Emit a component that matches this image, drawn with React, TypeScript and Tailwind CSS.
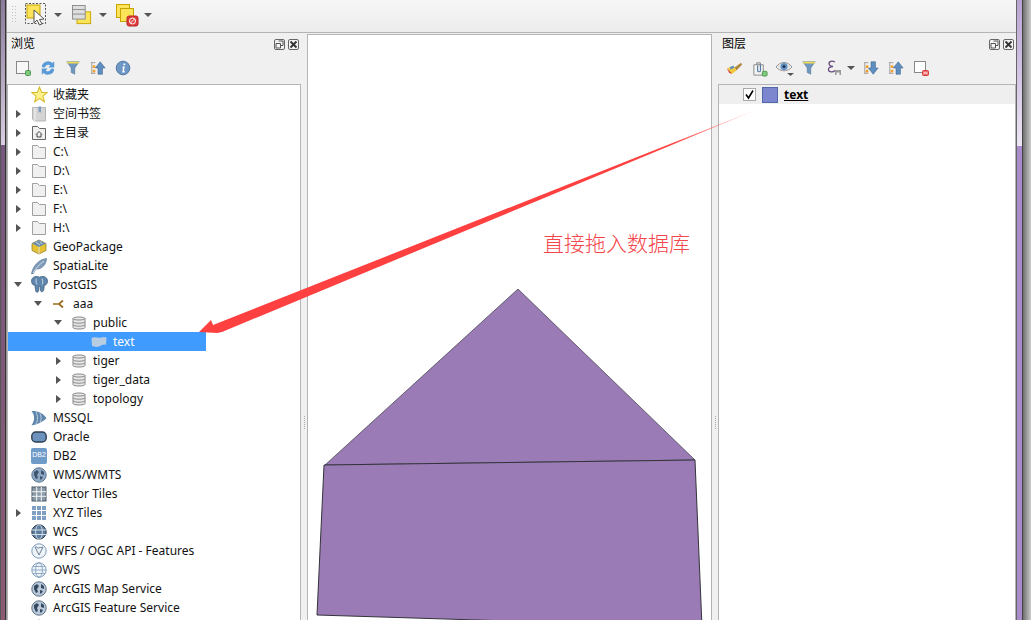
const UI_FONT = 'font-["Noto_Sans","Noto_Sans_CJK_SC",sans-serif]'

type Arrow = 'right' | 'down' | null

interface TreeRow {
  label: string
  depth: number
  arrow: Arrow
  icon: keyof typeof ICONS
  cjk?: boolean
  selected?: boolean
}

function Svg({ children, size = 16 }: { children: React.ReactNode; size?: number }) {
  return (
    <svg width={size} height={size} viewBox="0 0 16 16" className="shrink-0">
      {children}
    </svg>
  )
}

function Globe({ fill = '#8fa9c4', land = '#3f556e', rim = '#5a7694' }: { fill?: string; land?: string; rim?: string }) {
  return (
    <Svg>
      <circle cx="8" cy="8" r="7.2" fill={fill} stroke={rim} />
      <path d="M3 5 L6 3 L8 5 L6 8 L7 11 L5 12 L3 8 Z M10 3 L13 5 L13 8 L10 7 Z M9 9 L12 10 L10 13 L9 12 Z" fill={land} />
    </Svg>
  )
}

function LineGlobe({ stroke = '#7f9cbc' }: { stroke?: string }) {
  return (
    <Svg>
      <circle cx="8" cy="8" r="7.2" fill="#eef3f8" stroke={stroke} />
      <ellipse cx="8" cy="8" rx="3.4" ry="7.2" fill="none" stroke={stroke} strokeWidth="0.8" />
      <path d="M1 8 H15 M2 4.5 H14 M2 11.5 H14" stroke={stroke} strokeWidth="0.8" />
    </Svg>
  )
}

function DbIcon() {
  return (
    <Svg>
      <path d="M2 3.5 C2 1.5 14 1.5 14 3.5 V12.5 C14 14.5 2 14.5 2 12.5 Z" fill="#e8e8e8" stroke="#8a8a8a" />
      <path d="M2 3.5 C2 5.5 14 5.5 14 3.5 M2 6.7 C2 8.7 14 8.7 14 6.7 M2 9.7 C2 11.7 14 11.7 14 9.7" fill="none" stroke="#8a8a8a" />
    </Svg>
  )
}

function FolderIcon({ home }: { home?: boolean }) {
  return (
    <Svg>
      <path d="M1.5 1.5 H6.5 L8.5 3.5 H14.5 V14.5 H1.5 Z" fill="#f0f0f0" stroke={home ? '#666' : '#a0a0a0'} />
      {home && <path d="M5 9.5 L8 6.5 L11 9.5 M6 9 V12 H10 V9" fill="none" stroke="#444" />}
    </Svg>
  )
}

const ICONS = {
  star: (
    <Svg size={17}>
      <path d="M8 1 L10 6 L15.2 6.2 L11.2 9.5 L12.6 14.8 L8 11.8 L3.4 14.8 L4.8 9.5 L0.8 6.2 L6 6 Z" fill="#fdf38a" stroke="#d9b928" />
    </Svg>
  ),
  bookmark: (
    <Svg>
      <path d="M1.5 1.5 H14.5 V15 H3.5 L1.5 13 Z" fill="#d4d4d4" stroke="#b5b5b5" />
      <path d="M4 2 V15" stroke="#f2f2f2" />
      <path d="M7.5 0.5 H10 V7 L8.8 5.6 L7.5 7 Z" fill="#7e9cbd" />
    </Svg>
  ),
  home: <FolderIcon home />,
  folder: <FolderIcon />,
  geopackage: (
    <Svg>
      <path d="M8 1 L15 4.5 V11.5 L8 15 L1 11.5 V4.5 Z" fill="#e6c233" stroke="#8a7420" strokeWidth="0.7" />
      <path d="M8 1 L15 4.5 L8 8 L1 4.5 Z" fill="#6f8fb0" />
      <path d="M8 8 V15 M5 3 L9 6 M9 2.5 L11 5" stroke="#dfe8f0" strokeWidth="0.8" />
    </Svg>
  ),
  spatialite: (
    <Svg>
      <path d="M0.5 16 C1.5 9 7 1.5 15.5 0.5 C15.5 6 11 11.5 5 11 L2 16 Z" fill="#7f9cba" stroke="#4f6c8c" strokeWidth="0.6" />
      <path d="M2 15 C5 10 9 6 13 3" stroke="#e3ebf3" strokeWidth="0.8" fill="none" />
    </Svg>
  ),
  postgis: (
    <svg width="17" height="17" viewBox="0 0 16 16" className="shrink-0">
      <path d="M0.5 4.5 C0.5 0.5 6 -0.5 8 1.2 C10 -0.5 15.5 0.5 15.5 4.5 C15.5 8 13.5 9 12.5 8.5 L12 13 C11.5 15.5 9 15.5 8.8 13 L8.5 9.5 L7.2 10 L7.2 14 C6.5 16 4.2 15.5 4.2 13 L3.8 8.5 C2 9 0.5 7.5 0.5 4.5 Z" fill="#5f86ac" stroke="#38587a" strokeWidth="0.7" />
      <path d="M10.5 2.5 C11.5 5 11 7 10.5 8 M5 2.5 C4.5 5 5 7 5.5 8" stroke="#dce6ef" strokeWidth="0.8" fill="none" />
    </svg>
  ),
  connection: (
    <Svg>
      <path d="M2 8 H8 L12 4.5 M8 8 L12 11.5" fill="none" stroke="#9a6a1e" strokeWidth="1.7" />
    </Svg>
  ),
  db: <DbIcon />,
  layer: (
    <Svg>
      <path d="M0.5 4 C4 2 7 4.5 10 3.5 C12 3 14 3 15.5 3.5 L15 11 C12.5 10 11 11 8 12.5 C5 13.5 3 12.5 1 12 Z" fill="#b9cde2" />
    </Svg>
  ),
  mssql: (
    <Svg>
      <path d="M0.5 1 C6 0.5 12 3 15.5 8 C12 12 6 14.5 0.5 15.5 C4 10 4 6 0.5 1 Z" fill="#5f86ac" />
      <path d="M5 2 C7 6 7 10 5 14 M9 3.5 C10.5 7 10.5 10 9 12.5" stroke="#d3e0ec" strokeWidth="0.8" fill="none" />
    </Svg>
  ),
  oracle: (
    <Svg>
      <rect x="0.8" y="3" width="14.4" height="10" rx="4" fill="#6b93bd" stroke="#2f3f52" strokeWidth="1.4" />
    </Svg>
  ),
  db2: (
    <div className="flex h-4 w-4 items-center justify-center rounded-[2px] bg-[#6f9bc9] font-['Liberation_Sans',sans-serif] text-[7px] text-white">
      DB2
    </div>
  ),
  wms: <Globe />,
  vectorTiles: (
    <Svg>
      <rect x="1" y="1" width="14" height="14" fill="#8b9aa9" stroke="#4d5a68" />
      <path d="M5.7 1 V15 M10.3 1 V15 M1 5.7 H15 M1 10.3 H15" stroke="#f6f6f6" />
    </Svg>
  ),
  xyz: (
    <Svg>
      <path d="M1 1 h4 v4 h-4 Z M6 1 h4 v4 h-4 Z M11 1 h4 v4 h-4 Z M1 6 h4 v4 h-4 Z M6 6 h4 v4 h-4 Z M11 6 h4 v4 h-4 Z M1 11 h4 v4 h-4 Z M6 11 h4 v4 h-4 Z M11 11 h4 v4 h-4 Z" fill="#7f9fc4" />
    </Svg>
  ),
  wcs: (
    <Svg>
      <circle cx="8" cy="8" r="7.2" fill="#5d7d9e" stroke="#2d3f52" />
      <ellipse cx="8" cy="8" rx="3.4" ry="7.2" fill="none" stroke="#e3ebf3" strokeWidth="0.8" />
      <path d="M1 6 H15 M1 10.5 H15" stroke="#e3ebf3" strokeWidth="0.9" />
    </Svg>
  ),
  wfs: (
    <Svg>
      <circle cx="8" cy="8" r="7.2" fill="#eef3f8" stroke="#7f9cbc" />
      <path d="M4 4 L8 12 L12 4 M4 4 C6 3 6.5 6 8 5 C9.5 4 10 5 12 4" fill="none" stroke="#6a7f96" />
    </Svg>
  ),
  ows: <LineGlobe />,
  arcgis: <Globe fill="#b9c9da" land="#36495f" rim="#5b6f85" />,
  peek: (
    <Svg>
      <path d="M8 0 L11 5 H5 Z" fill="#7f9cbc" />
    </Svg>
  ),
}

const TREE_ROWS: TreeRow[] = [
  { label: '收藏夹', depth: 0, arrow: null, icon: 'star', cjk: true },
  { label: '空间书签', depth: 0, arrow: 'right', icon: 'bookmark', cjk: true },
  { label: '主目录', depth: 0, arrow: 'right', icon: 'home', cjk: true },
  { label: 'C:\\', depth: 0, arrow: 'right', icon: 'folder' },
  { label: 'D:\\', depth: 0, arrow: 'right', icon: 'folder' },
  { label: 'E:\\', depth: 0, arrow: 'right', icon: 'folder' },
  { label: 'F:\\', depth: 0, arrow: 'right', icon: 'folder' },
  { label: 'H:\\', depth: 0, arrow: 'right', icon: 'folder' },
  { label: 'GeoPackage', depth: 0, arrow: null, icon: 'geopackage' },
  { label: 'SpatiaLite', depth: 0, arrow: null, icon: 'spatialite' },
  { label: 'PostGIS', depth: 0, arrow: 'down', icon: 'postgis' },
  { label: 'aaa', depth: 1, arrow: 'down', icon: 'connection' },
  { label: 'public', depth: 2, arrow: 'down', icon: 'db' },
  { label: 'text', depth: 3, arrow: null, icon: 'layer', selected: true },
  { label: 'tiger', depth: 2, arrow: 'right', icon: 'db' },
  { label: 'tiger_data', depth: 2, arrow: 'right', icon: 'db' },
  { label: 'topology', depth: 2, arrow: 'right', icon: 'db' },
  { label: 'MSSQL', depth: 0, arrow: null, icon: 'mssql' },
  { label: 'Oracle', depth: 0, arrow: null, icon: 'oracle' },
  { label: 'DB2', depth: 0, arrow: null, icon: 'db2' },
  { label: 'WMS/WMTS', depth: 0, arrow: null, icon: 'wms' },
  { label: 'Vector Tiles', depth: 0, arrow: null, icon: 'vectorTiles' },
  { label: 'XYZ Tiles', depth: 0, arrow: 'right', icon: 'xyz' },
  { label: 'WCS', depth: 0, arrow: null, icon: 'wcs' },
  { label: 'WFS / OGC API - Features', depth: 0, arrow: null, icon: 'wfs' },
  { label: 'OWS', depth: 0, arrow: null, icon: 'ows' },
  { label: 'ArcGIS Map Service', depth: 0, arrow: null, icon: 'arcgis' },
  { label: 'ArcGIS Feature Service', depth: 0, arrow: null, icon: 'arcgis' },
  { label: '', depth: 0, arrow: null, icon: 'peek' },
]

function DropCaret() {
  return <div className="h-0 w-0 border-x-[4px] border-t-[4px] border-x-transparent border-t-[#555]" />
}

function TreeItem({ row }: { row: TreeRow }) {
  return (
    <div
      className={`flex h-[19px] shrink-0 items-center ${row.selected ? 'w-[198px] bg-[#3f9bfd] text-white' : 'text-[#111]'}`}
      style={{ paddingLeft: row.depth * 20 }}
    >
      <div className="flex w-5 shrink-0 items-center justify-center">
        {row.arrow === 'right' && (
          <div className="h-0 w-0 border-y-[4px] border-l-[5px] border-y-transparent border-l-[#555]" />
        )}
        {row.arrow === 'down' && (
          <div className="h-0 w-0 border-x-[4px] border-t-[5px] border-x-transparent border-t-[#555]" />
        )}
      </div>
      <div className="ml-[3px] mr-[6px] flex w-4 shrink-0 items-center justify-center">{ICONS[row.icon]}</div>
      <span className="whitespace-nowrap text-[12px]">{row.label}</span>
    </div>
  )
}

function DockButtons() {
  return (
    <div className="flex items-center gap-[3px]">
      <div className="flex h-[11px] w-[11px] items-center justify-center rounded-[2px] border border-[#666] bg-[#f4f4f4]">
        <svg width="9" height="9" viewBox="0 0 9 9">
          <path d="M3.5 1 H8 V5.5 H6 M1 3.5 H5.5 V8 H1 Z" fill="none" stroke="#555" />
        </svg>
      </div>
      <div className="flex h-[11px] w-[11px] items-center justify-center rounded-[2px] border border-[#666] bg-[#f4f4f4]">
        <svg width="9" height="9" viewBox="0 0 9 9">
          <path d="M1.5 1.5 L7.5 7.5 M7.5 1.5 L1.5 7.5" stroke="#333" strokeWidth="1.8" />
        </svg>
      </div>
    </div>
  )
}

function PanelTitle({ title }: { title: string }) {
  return (
    <div className="flex h-[20px] shrink-0 items-center justify-between pl-1 pr-[2px]">
      <span className="text-[12px] text-black">{title}</span>
      <DockButtons />
    </div>
  )
}

function Splitter() {
  return (
    <div className="flex w-[6px] shrink-0 flex-col items-center pt-[382px]">
      <div className="flex flex-col gap-[1px]">
        {[0, 1, 2, 3, 4, 5, 6].map(i => (
          <div key={i} className="h-[1px] w-[1px] bg-[#aaa]" />
        ))}
      </div>
    </div>
  )
}

function Funnel() {
  return (
    <svg width="16" height="16" viewBox="0 0 18 18">
      <path d="M2 2 H16 L11 9 V16 L7 14 V9 Z" fill="#6f97bf" stroke="#4d7298" strokeWidth="0.6" />
      <path d="M2 2 H16 L15 4 H3 Z" fill="#f2d94e" />
    </svg>
  )
}

function CollapseExpand({ down }: { down?: boolean }) {
  return (
    <svg width="16" height="16" viewBox="0 0 18 18">
      <path d="M1 3 H6 M2 3 V15 M1 15 H6" fill="none" stroke="#999" />
      <rect x="3" y="6" width="3" height="3" fill="#f0a030" />
      <rect x="3" y="11" width="3" height="3" fill="#f0a030" />
      {down ? (
        <path d="M9 2 H14 V9 H17 L11.5 16 L6 9 H9 Z" fill="#5f8fc0" stroke="#365f8a" strokeWidth="0.6" />
      ) : (
        <path d="M9 16 H14 V9 H17 L11.5 2 L6 9 H9 Z" fill="#5f8fc0" stroke="#365f8a" strokeWidth="0.6" />
      )}
    </svg>
  )
}

function BrowserToolbar() {
  return (
    <div className="flex h-[30px] shrink-0 items-center gap-[9px] pb-[2px] pl-2">
      <svg width="16" height="16" viewBox="0 0 16 16">
        <rect x="1.5" y="1.5" width="12" height="12" fill="#f8f8f8" stroke="#888" />
        <rect x="10.5" y="10.5" width="5" height="5" rx="1" fill="#7fc97f" stroke="#4f9a4f" />
      </svg>
      <svg width="16" height="16" viewBox="0 0 18 18">
        <path d="M2 8 A7 7 0 0 1 14 3.5 L16 1.5 V8.5 H9.5 L11.5 6 A4 4 0 0 0 5.5 8.5 Z" fill="#5a9ad6" />
        <path d="M16 10 A7 7 0 0 1 4 14.5 L2 16.5 V9.5 H8.5 L6.5 12 A4 4 0 0 0 12.5 9.5 Z" fill="#5a9ad6" />
      </svg>
      <Funnel />
      <CollapseExpand />
      <svg width="16" height="16" viewBox="0 0 16 16">
        <circle cx="8" cy="8" r="6.8" fill="#6f97c6" stroke="#5078a5" />
        <path d="M8.6 3.5 h1.6 v1.7 h-1.8 Z M7.6 6.5 h2.2 L8.9 11 h1 L9.6 12.5 H7.2 L8.1 7.8 H7.4 Z" fill="#fff" />
      </svg>
    </div>
  )
}

function LayersToolbar() {
  return (
    <div className="flex h-[30px] shrink-0 items-center pb-[2px] pl-[8px]">
      <svg width="17" height="17" viewBox="0 0 18 18" className="mr-[8px]">
        <path d="M9 8 L16 3 L17 5 L11 11 Z" fill="#b08a3c" />
        <path d="M1 9 L8 6 L11 11 L6 15 Z" fill="#f0c840" />
        <path d="M1 9 L5 13 L6 15 L3 13 Z" fill="#d0453a" />
        <path d="M4 7.5 L8 6 L9 8 L5 10 Z" fill="#5f8fc0" />
      </svg>
      <svg width="17" height="17" viewBox="0 0 18 18" className="mr-[7px]">
        <path d="M3 5 H13 V16 H3 Z" fill="#f2f2f2" stroke="#888" />
        <path d="M6 3 H10 V5 H6 Z" fill="#ddd" stroke="#888" />
        <path d="M7 6 V11 A1.5 1.5 0 0 0 10 11 V5" fill="none" stroke="#4f79a5" strokeWidth="1.2" />
        <rect x="12" y="12" width="5" height="5" rx="1" fill="#7fc97f" stroke="#4f9a4f" />
      </svg>
      <svg width="20" height="18" viewBox="0 0 20 18" className="mr-[6px]">
        <path d="M1 8 C5 2 13 2 17 8 C13 13 5 13 1 8 Z" fill="#e6e6e6" stroke="#999" />
        <circle cx="9" cy="7.5" r="3.5" fill="#5b8ec2" />
        <circle cx="9" cy="7.5" r="1.3" fill="#223" />
        <path d="M12 14 H19 L15.5 17 Z" fill="#555" />
      </svg>
      <div className="mr-[9px] flex">
        <Funnel />
      </div>
      <svg width="18" height="18" viewBox="0 0 18 18" className="mr-[3px]">
        <path d="M9 3 C5 1 2 3 3.5 6 C4 7 5 7.5 7 7.5 C4 7.5 2 9 2.5 11 C3 13.5 7 13.5 9 11.5" fill="none" stroke="#6a4a80" strokeWidth="1.3" />
        <path d="M9 11 H15 V16 H13.5 V13.5 H10.5 V16 H9 Z" fill="#999" />
      </svg>
      <div className="mr-[8px]">
        <DropCaret />
      </div>
      <div className="mr-[9px] flex">
        <CollapseExpand down />
      </div>
      <div className="mr-[9px] flex">
        <CollapseExpand />
      </div>
      <svg width="16" height="16" viewBox="0 0 16 16">
        <rect x="1.5" y="1.5" width="11" height="11" fill="#fff" stroke="#888" />
        <rect x="9.5" y="10.5" width="6" height="5" rx="1" fill="#f26d6d" stroke="#d43c3c" />
        <path d="M10.5 13 H14.5" stroke="#fff" />
      </svg>
    </div>
  )
}

function MainToolbar() {
  return (
    <div className="flex h-[33px] shrink-0 items-start border-b border-[#b4b4b4] bg-gradient-to-b from-[#f7f7f7] to-[#ececec] pl-[5px]">
      <div className="mt-[6px] mr-[9px] grid grid-cols-2 gap-x-[2px] gap-y-[2px]">
        {[0, 1, 2, 3, 4, 5, 6, 7, 8, 9, 10, 11].map(i => (
          <div key={i} className="h-[1px] w-[1px] bg-[#c0c0c0]" />
        ))}
      </div>
      <svg width="24" height="24" viewBox="0 0 24 24" className="mt-[3px]">
        <rect x="0.5" y="0.5" width="20" height="20" fill="none" stroke="#555" strokeDasharray="2 1.5" />
        <rect x="2" y="2" width="13" height="13" fill="#fbe35a" stroke="#c9a400" />
        <path d="M9 7 L9 20 L12 17 L14.5 22 L17 21 L14.5 16.5 L19 16 Z" fill="#fff" stroke="#555" />
      </svg>
      <div className="mt-[13px] ml-[5px] mr-[10px]">
        <DropCaret />
      </div>
      <svg width="20" height="20" viewBox="0 0 22 22" className="mt-[5px]">
        <rect x="5.5" y="7.5" width="15" height="13" fill="#fbe35a" stroke="#c9a400" />
        <rect x="0.5" y="0.5" width="14" height="15" fill="#dedede" stroke="#888" />
        <path d="M0.5 5 H14.5 M0.5 10 H14.5" stroke="#888" />
      </svg>
      <div className="mt-[13px] ml-[7px] mr-[9px]">
        <DropCaret />
      </div>
      <svg width="24" height="24" viewBox="0 0 24 24" className="mt-[4px]">
        <rect x="0.5" y="0.5" width="13" height="13" fill="#fbe35a" stroke="#c9a400" />
        <rect x="4.5" y="4.5" width="13" height="13" fill="#fbe35a" stroke="#c9a400" />
        <rect x="11" y="12" width="11" height="10" rx="2" fill="#e03b3b" stroke="#b52424" />
        <circle cx="16.5" cy="17" r="3" fill="none" stroke="#fff" />
        <path d="M14.5 19 L18.5 15" stroke="#fff" />
      </svg>
      <div className="mt-[13px] ml-[4px]">
        <DropCaret />
      </div>
    </div>
  )
}

function MapCanvas() {
  return (
    <div className="relative w-[405px] shrink-0 overflow-hidden border-t border-l border-r border-[#b4b4b4] bg-white">
      <svg width="403" height="586" viewBox="0 0 403 586" className="block">
        {/* map coordinates are page coordinates minus the canvas origin (308,35) */}
        <polygon points="210,254 387,425 17,430" fill="#9a7bb5" stroke="#3b3b44" strokeWidth="0.7" />
        <polygon points="16,430 387,425 394,592 9,580" fill="#9a7bb5" stroke="#33333a" strokeWidth="1" />
      </svg>
      <span className="absolute left-[235px] top-[194px] text-[21px] font-light leading-7 whitespace-nowrap text-[#f4454a]">
        直接拖入数据库
      </span>
    </div>
  )
}

function DragArrow() {
  return (
    <svg width="1031" height="620" viewBox="0 0 1031 620" className="pointer-events-none absolute left-0 top-0">
      <defs>
        <linearGradient id="fade" gradientUnits="userSpaceOnUse" x1="762" y1="108" x2="670" y2="145">
          <stop offset="0" stopColor="#ff4040" stopOpacity="0.1" />
          <stop offset="1" stopColor="#ff4040" />
        </linearGradient>
      </defs>
      <polygon points="762,107.5 213,325 211,320 199,332 217,333 222,332" fill="url(#fade)" />
    </svg>
  )
}

export default function App() {
  return (
    <div className={`relative flex h-[620px] w-[1031px] overflow-hidden bg-[#f0f0f0] ${UI_FONT}`}>
      {/* desktop edge behind the window, left */}
      <div className="flex w-[7px] shrink-0">
        <div className="w-[1px] bg-[#555]" />
        <div className="flex w-[4px] flex-col">
          <div className="h-[145px] bg-gradient-to-b from-[#8b7a9a] to-[#d8cfe0]" />
          <div className="flex-1 bg-gradient-to-b from-[#76577f] to-[#8a5a72]" />
        </div>
        <div className="w-[1px] bg-[#333]" />
        <div className="w-[1px] bg-[#999]" />
      </div>

      <div className="flex min-w-0 flex-1 flex-col">
        <MainToolbar />
        <div className="flex min-h-0 flex-1 pt-[1px]">
          <div className="flex w-[294px] shrink-0 flex-col">
            <PanelTitle title="浏览" />
            <BrowserToolbar />
            <div className="flex min-h-0 flex-1 flex-col overflow-hidden border-t border-l border-r border-[#b4b4b4] bg-white">
              {TREE_ROWS.map((row, i) => (
                <TreeItem key={i} row={row} />
              ))}
            </div>
          </div>
          <Splitter />
          <MapCanvas />
          <Splitter />
          <div className="flex min-w-0 flex-1 flex-col">
            <PanelTitle title="图层" />
            <LayersToolbar />
            <div className="flex min-h-0 flex-1 flex-col border-t border-l border-r border-[#b4b4b4] bg-white">
              <div className="flex h-[19px] shrink-0 items-center bg-[#efefef] pl-6">
                <div className="flex h-[13px] w-[13px] items-center justify-center border border-[#aaa] bg-white">
                  <svg width="11" height="11" viewBox="0 0 11 11">
                    <path d="M2 5.5 L4.5 9 L9 1.5" fill="none" stroke="#000" strokeWidth="1.6" />
                  </svg>
                </div>
                <div className="ml-[6px] h-4 w-4 border border-[#5566aa] bg-[#7c86cf]" />
                <span className="ml-[6px] text-[12px] font-bold text-black underline">text</span>
              </div>
            </div>
          </div>
        </div>
      </div>

      {/* desktop edge behind the window, right */}
      <div className="flex w-[15px] shrink-0">
        <div className="w-[1px] bg-[#666]" />
        <div className="flex w-[5px] flex-col">
          <div className="h-[146px] bg-gradient-to-b from-[#b9a3d3] to-[#ece6f4]" />
          <div className="flex-1 bg-[#a98ccb]" />
        </div>
        <div className="w-[1px] bg-[#444]" />
        <div className="flex-1 bg-gradient-to-r from-[#6f6f6f] to-[#cccccc]" />
      </div>

      <DragArrow />
    </div>
  )
}
